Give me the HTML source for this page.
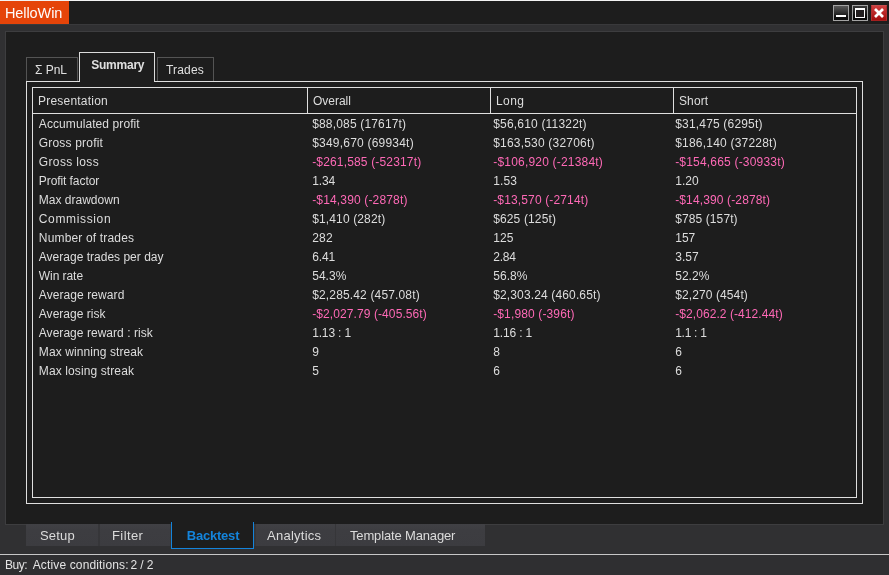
<!DOCTYPE html>
<html>
<head>
<meta charset="utf-8">
<title>HelloWin</title>
<style>
*{box-sizing:border-box;margin:0;padding:0}
html,body{width:889px;height:575px;overflow:hidden;background:#303032;font-family:"Liberation Sans",sans-serif;font-size:12px;color:#e4e4e4}
.abs{position:absolute}
#layer{left:0;top:0;width:889px;height:575px;will-change:transform;opacity:0.999}
#titlebar{left:0;top:0;width:889px;height:25px;background:#1e1e1e;border-top:1px solid #f4f4f4;border-bottom:1px solid #3a3a3c}
#title{left:0;top:1px;width:69px;height:23px;background:#e6450a;color:#fff;font-size:14.5px;line-height:23px;padding-left:5px;letter-spacing:-0.1px}
#title span{display:inline-block;transform:scaleY(1.07);transform-origin:50% 60%;position:relative;top:0.5px}
.wb{top:5px;width:16px;height:16px;border:1px solid #a4a4a4;background:linear-gradient(#5a5a5a,#2c2c2c 50%,#0e0e0e 80%)}
#panel{left:5px;top:31px;width:879px;height:494px;background:#1e1e1e;border:1px solid #3e3e40}
.tab{border:1px solid #555;border-bottom:none;background:#1e1e1e;text-align:center;color:#e0e0e0;font-size:12px}
#frame1{left:26px;top:81px;width:837px;height:423px;border:1px solid #e0e0e0}
#frame2{left:32px;top:87px;width:825px;height:411px;border:1px solid #e0e0e0}
.vl{top:88px;width:1px;height:25px;background:#e0e0e0}
#hl{left:33px;top:113px;width:823px;height:1px;background:#e0e0e0}
.t{white-space:nowrap;line-height:19px;height:19px;font-size:12px;color:#dedede;letter-spacing:0.12px}
.p{color:#ff6ab7}
.btab{top:524px;height:22px;background:linear-gradient(#424246,#3e3e42 30%,#3d3d41);color:#dcdcdc;font-size:13px;line-height:23px;text-align:center}
#status{left:0;top:554px;width:889px;height:21px;border-top:1px solid #c8c8c8;background:#303032;font-size:12px;line-height:21px;padding-left:5px;color:#e4e4e4;white-space:pre}
</style>
</head>
<body>
<div class="abs" id="layer">
<div class="abs" id="titlebar"></div>
<div class="abs" id="title"><span>HelloWin</span></div>
<div class="abs wb" style="left:833px"><div class="abs" style="left:2px;top:9px;width:10px;height:2px;background:#fff"></div></div>
<div class="abs wb" style="left:852px;background:linear-gradient(#3a3a3a,#0c0c0c 70%)"><div class="abs" style="left:2px;top:2px;width:10px;height:10px;border:1px solid #fff;border-top-width:2px;background:#231f20"></div></div>
<div class="abs wb" style="left:871px;background:linear-gradient(#cf3f3f,#a30d0d);border-color:#c45050 #b03030 #a52020 #b03030">
<svg class="abs" style="left:1px;top:1px" width="12" height="12" viewBox="0 0 12 12"><path d="M2 2L10 10M10 2L2 10" stroke="#fff" stroke-width="2.7"/></svg>
</div>

<div class="abs" id="panel"></div>

<div class="abs" id="frame1"></div>
<div class="abs tab" style="left:26px;top:57px;width:52px;height:24px;line-height:24px;padding-right:2px">Σ PnL</div>
<div class="abs tab" style="left:157px;top:57px;width:57px;height:24px;line-height:24px;letter-spacing:0.18px;padding-right:1px">Trades</div>
<div class="abs tab" style="left:79px;top:52px;width:76px;height:30px;line-height:24px;border-color:#dcdcdc;font-weight:bold;letter-spacing:-0.23px;padding-left:1.5px">Summary</div>
<div class="abs" id="frame2"></div>
<div class="abs vl" style="left:307px"></div>
<div class="abs vl" style="left:490px"></div>
<div class="abs vl" style="left:673px"></div>
<div class="abs" id="hl"></div>
<div class="abs t" id="h0" style="left:38px;top:92px;letter-spacing:0.210px">Presentation</div>
<div class="abs t" id="h1" style="left:313px;top:92px;letter-spacing:-0.030px">Overall</div>
<div class="abs t" id="h2" style="left:496px;top:92px;letter-spacing:0.450px">Long</div>
<div class="abs t" id="h3" style="left:679px;top:92px;letter-spacing:0.120px">Short</div>
<div class="abs t" id="c0_0" style="left:38.8px;top:115px;letter-spacing:0.088px">Accumulated profit</div>
<div class="abs t" id="c0_1" style="left:312.2px;top:115px;letter-spacing:0.168px">$88,085 (17617t)</div>
<div class="abs t" id="c0_2" style="left:493.2px;top:115px;letter-spacing:0.192px">$56,610 (11322t)</div>
<div class="abs t" id="c0_3" style="left:675.2px;top:115px;letter-spacing:0.184px">$31,475 (6295t)</div>
<div class="abs t" id="c1_0" style="left:38.8px;top:134px;letter-spacing:0.185px">Gross profit</div>
<div class="abs t" id="c1_1" style="left:312.2px;top:134px;letter-spacing:0.210px">$349,670 (69934t)</div>
<div class="abs t" id="c1_2" style="left:493.2px;top:134px;letter-spacing:0.199px">$163,530 (32706t)</div>
<div class="abs t" id="c1_3" style="left:675.2px;top:134px;letter-spacing:0.210px">$186,140 (37228t)</div>
<div class="abs t" id="c2_0" style="left:38.8px;top:153px;letter-spacing:0.360px">Gross loss</div>
<div class="abs t p" id="c2_1" style="left:312.2px;top:153px;letter-spacing:0.160px">-$261,585 (-52317t)</div>
<div class="abs t p" id="c2_2" style="left:493.2px;top:153px;letter-spacing:0.200px">-$106,920 (-21384t)</div>
<div class="abs t p" id="c2_3" style="left:675.2px;top:153px;letter-spacing:0.190px">-$154,665 (-30933t)</div>
<div class="abs t" id="c3_0" style="left:38.8px;top:172px;letter-spacing:-0.075px">Profit factor</div>
<div class="abs t" id="c3_1" style="left:312.2px;top:172px;letter-spacing:-0.120px">1.34</div>
<div class="abs t" id="c3_2" style="left:493.2px;top:172px;letter-spacing:0.120px">1.53</div>
<div class="abs t" id="c3_3" style="left:675.2px;top:172px;letter-spacing:0.060px">1.20</div>
<div class="abs t" id="c4_0" style="left:38.8px;top:191px;letter-spacing:0.005px">Max drawdown</div>
<div class="abs t p" id="c4_1" style="left:312.2px;top:191px;letter-spacing:0.154px">-$14,390 (-2878t)</div>
<div class="abs t p" id="c4_2" style="left:493.2px;top:191px;letter-spacing:0.143px">-$13,570 (-2714t)</div>
<div class="abs t p" id="c4_3" style="left:675.2px;top:191px;letter-spacing:0.131px">-$14,390 (-2878t)</div>
<div class="abs t" id="c5_0" style="left:38.8px;top:210px;letter-spacing:0.640px">Commission</div>
<div class="abs t" id="c5_1" style="left:312.2px;top:210px;letter-spacing:0.135px">$1,410 (282t)</div>
<div class="abs t" id="c5_2" style="left:493.2px;top:210px;letter-spacing:0.138px">$625 (125t)</div>
<div class="abs t" id="c5_3" style="left:675.2px;top:210px;letter-spacing:0.102px">$785 (157t)</div>
<div class="abs t" id="c6_0" style="left:38.8px;top:229px;letter-spacing:0.168px">Number of trades</div>
<div class="abs t" id="c6_1" style="left:312.2px;top:229px;letter-spacing:0.210px">282</div>
<div class="abs t" id="c6_2" style="left:493.2px;top:229px;letter-spacing:0.120px">125</div>
<div class="abs t" id="c6_3" style="left:675.2px;top:229px;letter-spacing:0.030px">157</div>
<div class="abs t" id="c7_0" style="left:38.8px;top:248px;letter-spacing:0.009px">Average trades per day</div>
<div class="abs t" id="c7_1" style="left:312.2px;top:248px;letter-spacing:-0.120px">6.41</div>
<div class="abs t" id="c7_2" style="left:493.2px;top:248px;letter-spacing:-0.180px">2.84</div>
<div class="abs t" id="c7_3" style="left:675.2px;top:248px;letter-spacing:0.060px">3.57</div>
<div class="abs t" id="c8_0" style="left:38.8px;top:267px;letter-spacing:-0.060px">Win rate</div>
<div class="abs t" id="c8_1" style="left:312.2px;top:267px;letter-spacing:0.030px">54.3%</div>
<div class="abs t" id="c8_2" style="left:493.2px;top:267px;letter-spacing:0.075px">56.8%</div>
<div class="abs t" id="c8_3" style="left:675.2px;top:267px;letter-spacing:0.030px">52.2%</div>
<div class="abs t" id="c9_0" style="left:38.8px;top:286px;letter-spacing:0.078px">Average reward</div>
<div class="abs t" id="c9_1" style="left:312.2px;top:286px;letter-spacing:0.150px">$2,285.42 (457.08t)</div>
<div class="abs t" id="c9_2" style="left:493.2px;top:286px;letter-spacing:0.140px">$2,303.24 (460.65t)</div>
<div class="abs t" id="c9_3" style="left:675.2px;top:286px;letter-spacing:0.105px">$2,270 (454t)</div>
<div class="abs t" id="c10_0" style="left:38.8px;top:305px;letter-spacing:0.022px">Average risk</div>
<div class="abs t p" id="c10_1" style="left:312.2px;top:305px;letter-spacing:0.093px">-$2,027.79 (-405.56t)</div>
<div class="abs t p" id="c10_2" style="left:493.2px;top:305px;letter-spacing:0.133px">-$1,980 (-396t)</div>
<div class="abs t p" id="c10_3" style="left:675.2px;top:305px;letter-spacing:0.073px">-$2,062.2 (-412.44t)</div>
<div class="abs t" id="c11_0" style="left:38.8px;top:324px;letter-spacing:0.039px">Average reward : risk</div>
<div class="abs t" id="c11_1" style="left:312.2px;top:324px;letter-spacing:-0.163px">1.13 : 1</div>
<div class="abs t" id="c11_2" style="left:493.2px;top:324px;letter-spacing:-0.137px">1.16 : 1</div>
<div class="abs t" id="c11_3" style="left:675.2px;top:324px;letter-spacing:-0.270px">1.1 : 1</div>
<div class="abs t" id="c12_0" style="left:38.8px;top:343px;letter-spacing:0.088px">Max winning streak</div>
<div class="abs t" id="c12_1" style="left:312.2px;top:343px;letter-spacing:0.120px">9</div>
<div class="abs t" id="c12_2" style="left:493.2px;top:343px;letter-spacing:0.120px">8</div>
<div class="abs t" id="c12_3" style="left:675.2px;top:343px;letter-spacing:0.120px">6</div>
<div class="abs t" id="c13_0" style="left:38.8px;top:362px;letter-spacing:0.109px">Max losing streak</div>
<div class="abs t" id="c13_1" style="left:312.2px;top:362px;letter-spacing:0.120px">5</div>
<div class="abs t" id="c13_2" style="left:493.2px;top:362px;letter-spacing:0.120px">6</div>
<div class="abs t" id="c13_3" style="left:675.2px;top:362px;letter-spacing:0.120px">6</div>


<div class="abs" style="left:26px;top:524px;width:459px;height:22px;background:#37373a"></div>
<div class="abs btab" style="left:26px;width:72px;text-align:left;padding-left:14px;letter-spacing:0.2px">Setup</div>
<div class="abs btab" style="left:100px;width:70px;text-align:left;padding-left:12px;letter-spacing:0.4px">Filter</div>
<div class="abs btab" style="left:171px;top:522px;width:83px;background:#1e1e1e;border:1px solid #1585dc;border-top:none;color:#1585dc;font-weight:bold;height:27px;line-height:28px;letter-spacing:-0.2px;padding-left:1px">Backtest</div>
<div class="abs btab" style="left:256px;width:79px;text-align:left;padding-left:11px;letter-spacing:0.25px">Analytics</div>
<div class="abs btab" style="left:336px;width:149px;text-align:left;padding-left:14px;letter-spacing:-0.15px">Template Manager</div>

<div class="abs" id="status"><span style="letter-spacing:-0.45px">Buy:</span><span style="letter-spacing:0.14px;margin-left:5.5px">Active conditions:</span><span style="letter-spacing:-0.1px;margin-left:1.8px">2 / 2</span></div>
</div>
</body>
</html>
